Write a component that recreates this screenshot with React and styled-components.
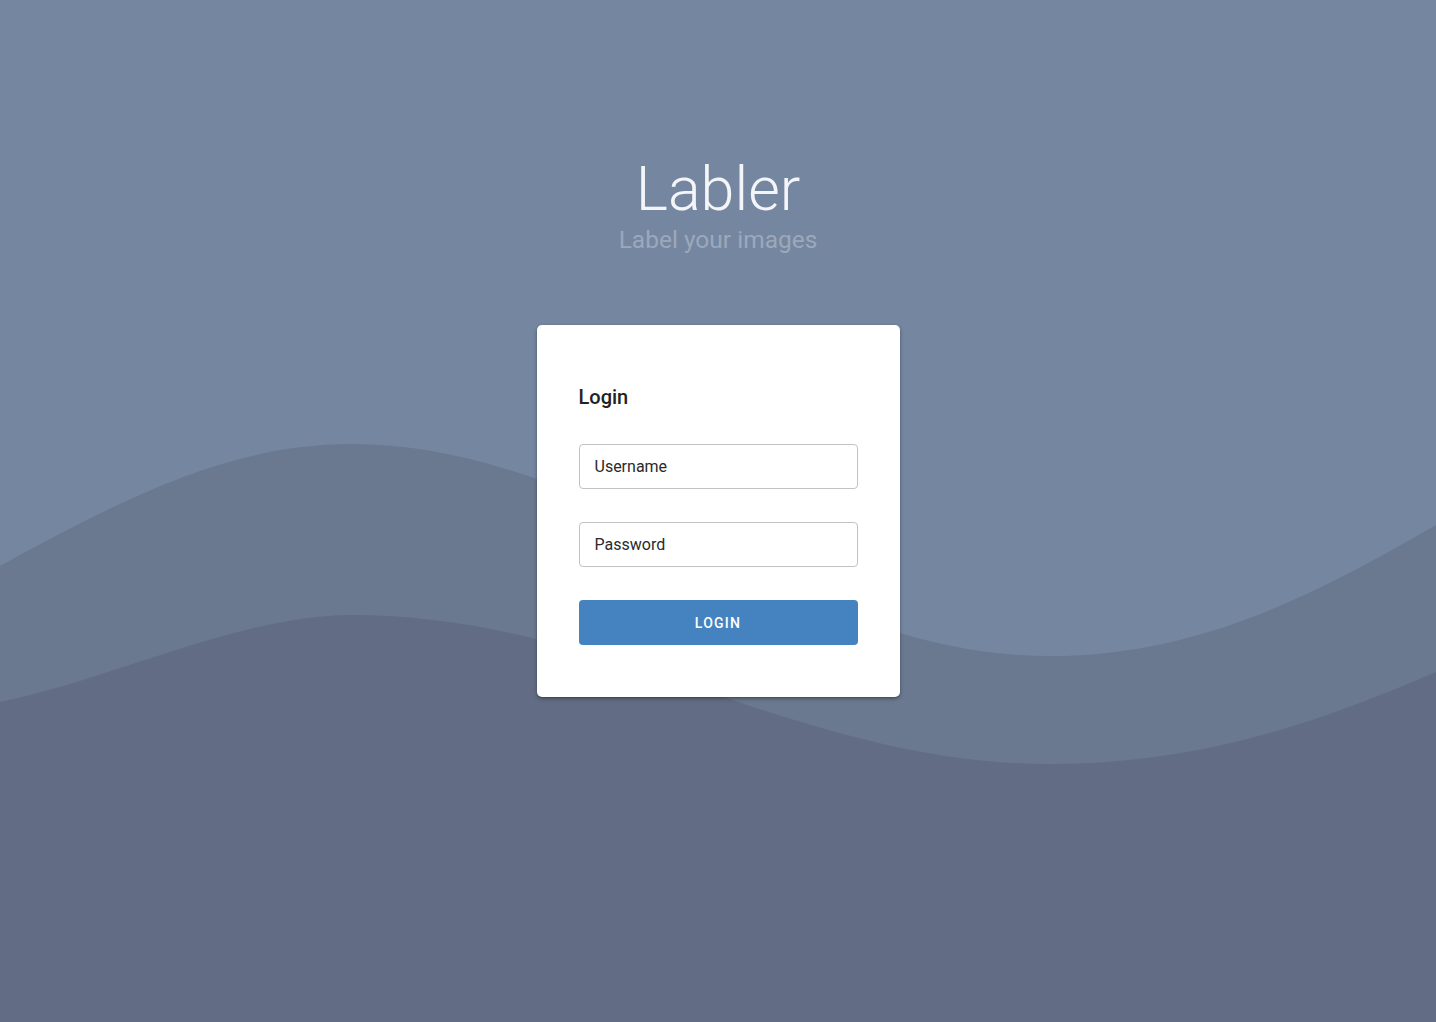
import React from "react"
import styled, { createGlobalStyle } from "styled-components"

const GlobalStyle = createGlobalStyle`
    * { box-sizing: border-box; }
    html, body {
        margin: 0;
        padding: 0;
        font-family: Roboto, "Liberation Sans", sans-serif;
    }
`

const Page = styled.div`
    position: relative;
    min-height: 100vh;
    overflow: hidden;
    background-color: #7586a0;
`

const Waves = styled.svg`
    position: absolute;
    inset: 0;
    width: 100%;
    height: 100%;
    z-index: 0;
`

const Content = styled.main`
    position: relative;
    z-index: 1;
    display: flex;
    flex-direction: column;
    align-items: center;
    padding-top: 157px;
`

const Title = styled.h1`
    margin: 0;
    font-size: 61px;
    line-height: 64px;
    font-weight: 300;
    color: rgba(255, 255, 255, 0.92);
`

const Subtitle = styled.p`
    margin: 5px 0 0;
    font-size: 24.5px;
    line-height: 28px;
    font-weight: 400;
    color: rgba(255, 255, 255, 0.3);
`

const Card = styled.form`
    margin-top: 71px;
    width: 363px;
    padding: 56px 42px 52px;
    background-color: #fff;
    border-radius: 5px;
    box-shadow: 0 2px 4px rgba(0, 0, 0, 0.25), 0 1px 2px rgba(0, 0, 0, 0.2);
    display: flex;
    flex-direction: column;
`

const CardTitle = styled.h2`
    margin: 0 0 31px;
    font-size: 20px;
    line-height: 32px;
    font-weight: 500;
    color: #222;
`

const Field = styled.input`
    width: 100%;
    height: 45px;
    margin-bottom: 33px;
    padding: 0 15px;
    border: 1px solid #c2c2c2;
    border-radius: 4px;
    font-family: inherit;
    font-size: 16px;
    color: #222;
    outline: none;

    &::placeholder {
        color: #2a2a2a;
        opacity: 1;
    }
`

const Button = styled.button`
    width: 100%;
    height: 45px;
    border: none;
    border-radius: 4px;
    background-color: #4483c0;
    color: #fff;
    font-family: inherit;
    font-size: 14px;
    font-weight: 500;
    letter-spacing: 1.25px;
    cursor: pointer;
`

export default function App() {
    return (
        <>
        <GlobalStyle />
        <Page>
            <Waves viewBox="0 0 1436 1022" preserveAspectRatio="none">
                <path
                    fill="#6a798f"
                    d="M0,566 C120,500 230,444 350,444 C605,444 795,656 1050,656 C1200,656 1320,592 1436,525 L1436,1022 L0,1022 Z"/>
                <path
                    fill="#626d85"
                    d="M0,702 C110,680 240,615 352,615 C607,615 795,764 1050,764 C1200,764 1320,722 1436,672 L1436,1022 L0,1022 Z"/>
            </Waves>
            <Content>
                <Title>Labler</Title>
                <Subtitle>Label your images</Subtitle>
                <Card onSubmit={e => e.preventDefault()}>
                    <CardTitle>Login</CardTitle>
                    <Field type="text" placeholder="Username" />
                    <Field type="password" placeholder="Password" />
                    <Button type="submit">LOGIN</Button>
                </Card>
            </Content>
        </Page>
        </>
    )
}
